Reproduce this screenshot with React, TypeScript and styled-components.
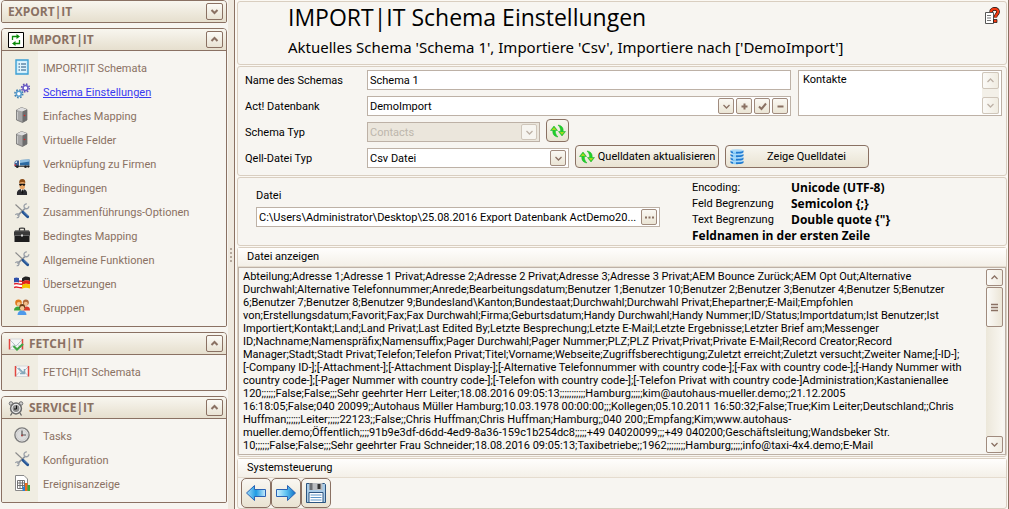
import React from "react";
import styled, { createGlobalStyle, css } from "styled-components";

const brown = "#8a7163";
const field = "#bdb1a6";
const groove = "#d9cec0";
const paper = "#f7f5f1";
const ui = 'Roboto, "Liberation Sans", sans-serif';
const display = '"Open Sans", "Noto Sans", sans-serif';

const Global = createGlobalStyle`
  * { box-sizing: border-box; }
  body { margin: 0; background: ${paper}; font: 11px/13px ${ui}; color: #000; }
  button, input, select, textarea { font: inherit; color: inherit; margin: 0; }
`;

/* ---------- window frame ---------- */

const Shell = styled.div`
  display: flex;
  min-height: 100vh;
  overflow: hidden;
`;

const Sidebar = styled.nav`
  flex: none;
  width: 228px;
  padding-left: 1px;
  display: flex;
  flex-direction: column;
  gap: 5px;
`;

const Splitter = styled.div`
  flex: none;
  width: 7px;
  display: flex;
  flex-direction: column;
  align-items: center;
  justify-content: center;
  gap: 2px;
  background: #efe9df;
  border-right: 1px solid ${brown};
  i { width: 2px; height: 2px; background: #b5a89c; }
`;

const Main = styled.main`
  flex: 1;
  min-width: 0;
  display: flex;
  flex-direction: column;
  padding: 1px 0 0 1px;
  border-right: 1px solid ${brown};
  background: #fbf8f3;
`;

/* ---------- sidebar groups ---------- */

const Group = styled.section`
  width: 226px;
  border: 1px solid ${brown};
  border-radius: 4px 4px 2px 2px;
  background: ${paper};
  overflow: hidden;
`;

const GroupHead = styled.header<{ $closed?: boolean }>`
  display: flex;
  align-items: center;
  height: ${(p) => (p.$closed ? 21 : 22)}px;
  padding: 0 3px 0 6px;
  gap: 5px;
  background: linear-gradient(#f8f6ef, #e6dfce);
  border-bottom: ${(p) => (p.$closed ? "none" : `1px solid ${brown}`)};
  h2 { flex: 1; margin: 0; font: 700 12px/16px ${display}; color: ${brown}; }
`;

const Fold = styled.button`
  width: 17px;
  height: 17px;
  padding: 0;
  display: grid;
  place-items: center;
  border: 1px solid ${brown};
  border-radius: 2px;
  background: linear-gradient(#fbfaf6, #e9e3d4);
  color: ${brown};
`;

const Items = styled.ul`
  margin: 0;
  padding: 5px 0 6px;
  list-style: none;
  background: linear-gradient(90deg, #f0ede2 36px, ${paper} 36px);
`;

const Item = styled.li`
  height: 24px;
  display: flex;
  align-items: center;
`;

const ItemIcon = styled.span`
  width: 41px;
  padding: 0 0 2px 12px;
  display: flex;
`;

const ItemLink = styled.a<{ $active?: boolean }>`
  color: ${(p) => (p.$active ? "#3a3af0" : brown)};
  text-decoration: ${(p) => (p.$active ? "underline" : "none")};
`;

/* ---------- panels ---------- */

const panel = css`
  border: 1px solid ${groove};
  border-radius: 3px;
  background: ${paper};
  margin: 0 1px 1px;
`;

const TitlePanel = styled.header`
  ${panel}
  display: flex;
  justify-content: space-between;
  align-items: flex-start;
  min-height: 64px;
  padding: 0 6px 0 50px;
  h1 { margin: 0; font: 400 23px/30px ${display}; }
  p { margin: 0; padding-top: 4px; font: 400 15px/22px "Noto Sans", sans-serif; }
`;

const HelpButton = styled.button`
  margin-top: 5px;
  padding: 0;
  border: 0;
  background: none;
  display: flex;
`;

const SchemaPanel = styled.section`
  ${panel}
  display: flex;
  gap: 7px;
  padding: 0 4px 0 7px;
  min-height: 110px;
`;

const Form = styled.div`
  flex: 1;
  min-width: 0;
  display: grid;
  grid-template-columns: 122px minmax(0, 1fr);
  grid-auto-rows: 26px;
  align-items: center;
`;

const Cell = styled.div`
  align-self: end;
  padding-bottom: 3px;
  display: flex;
  align-items: flex-end;
  gap: 6px;
`;

const TextBox = styled.div`
  flex: 1;
  min-width: 0;
  height: 20px;
  display: flex;
  align-items: center;
  gap: 2px;
  padding: 0 2px;
  border: 1px solid ${field};
  background: #fff;
  input {
    flex: 1;
    min-width: 0;
    height: 16px;
    padding: 0;
    border: 0;
    outline: 0;
    background: none;
    text-overflow: ellipsis;
  }
`;

const MiniButton = styled.button`
  flex: none;
  width: 16px;
  height: 16px;
  padding: 0;
  display: grid;
  place-items: center;
  border: 1px solid #a08b7e;
  border-radius: 2px;
  background: linear-gradient(#faf8f3, #ebe5d5);
  color: ${brown};
`;

const DropDown = styled.div<{ $w: number; $off?: boolean }>`
  flex: none;
  width: ${(p) => p.$w}px;
  height: 20px;
  display: grid;
  grid-template-columns: 1fr 18px;
  align-items: center;
  border: 1px solid ${field};
  background: ${(p) => (p.$off ? "#ebe6dc" : "#fff")};
  select {
    grid-area: 1 / 1 / 2 / 3;
    height: 18px;
    padding: 0 2px;
    border: 0;
    outline: 0;
    appearance: none;
    background: none;
    color: ${(p) => (p.$off ? "#bdb6ac" : "#000")};
    opacity: 1;
  }
`;

const DropArrow = styled.span<{ $off?: boolean }>`
  grid-area: 1 / 2 / 2 / 3;
  width: 16px;
  height: 16px;
  display: grid;
  place-items: center;
  pointer-events: none;
  border: 1px solid ${(p) => (p.$off ? "#cfc6ba" : "#a08b7e")};
  border-radius: 2px;
  background: ${(p) => (p.$off ? "#f7f5f0" : "linear-gradient(#faf8f3, #ebe5d5)")};
  color: ${(p) => (p.$off ? "#bdb1a6" : brown)};
`;

const PushButton = styled.button<{ $w?: number }>`
  flex: none;
  width: ${(p) => p.$w ?? 23}px;
  height: 23px;
  padding: 0 3px;
  display: flex;
  align-items: center;
  justify-content: center;
  gap: 3px;
  border: 1px solid ${brown};
  border-radius: 4px;
  background: linear-gradient(#f8f6f0, #e9e3d2);
  white-space: nowrap;
  svg { flex: none; }
  span { flex: 1; text-align: center; }
`;

const Memo = styled.div`
  flex: none;
  width: 204px;
  height: 46px;
  margin-top: 3px;
  display: flex;
  padding: 1px 2px;
  border: 1px solid ${field};
  background: #fff;
  textarea {
    flex: 1;
    min-width: 0;
    padding: 1px 2px;
    border: 0;
    outline: 0;
    resize: none;
    overflow: hidden;
    background: none;
  }
`;

const Bar = styled.div`
  flex: none;
  width: 17px;
  display: flex;
  flex-direction: column;
  justify-content: space-between;
  background: #f3f0e8;
`;

const BarButton = styled.button<{ $off?: boolean }>`
  height: 17px;
  padding: 0;
  display: grid;
  place-items: center;
  border: 1px solid ${(p) => (p.$off ? "#cfc6ba" : "#a08b7e")};
  border-radius: 2px;
  background: linear-gradient(90deg, #fbfaf7, #f0ece1);
  color: ${(p) => (p.$off ? "#bdb1a6" : brown)};
`;

const Track = styled.div`
  flex: 1;
  padding-top: 1px;
  background: linear-gradient(90deg, #ece7da, #f9f7f1);
`;

const Thumb = styled.div`
  height: 40px;
  display: grid;
  place-items: center;
  border: 1px solid #a08b7e;
  border-radius: 2px;
  background: linear-gradient(90deg, #fbfaf7, #ebe5d6);
  color: ${brown};
`;

const FilePanel = styled.section`
  ${panel}
  display: flex;
  min-height: 69px;
  padding: 2px 0 0 18px;
`;

const FileField = styled.div`
  flex: 1;
  min-width: 0;
  padding-top: 9px;
  display: flex;
  flex-direction: column;
  gap: 4px;
  label { line-height: 14px; }
  > div { flex: none; }
`;

const Facts = styled.dl`
  flex: none;
  width: 346px;
  margin: 0;
  padding-left: 32px;
  display: grid;
  grid-template-columns: 99px 1fr;
  grid-auto-rows: 16px;
  line-height: 16px;
  dt, dd { margin: 0; }
  dd { font: 700 12px/16px ${display}; white-space: nowrap; }
  dd:last-child { grid-column: 1 / 3; }
`;

const Section = styled.section<{ $grow?: boolean }>`
  ${panel}
  ${(p) => p.$grow && "flex: 1;"}
  display: flex;
  flex-direction: column;
`;

const Caption = styled.h3`
  margin: 0;
  padding: 2px 9px;
  font: 400 11px/14px ${ui};
  border-bottom: 1px solid #e5dccf;
  background: linear-gradient(#fffefd, #f4f0e8);
`;

const Viewer = styled.div`
  display: flex;
  margin: 0 0 1px;
  padding: 1px 2px 1px 0;
  border: 1px solid ${field};
  background: ${paper};
  textarea {
    flex: 1;
    min-width: 0;
    height: 184px;
    padding: 1px 0 0 4px;
    border: 0;
    outline: 0;
    resize: none;
    white-space: pre;
    overflow: hidden;
    background: none;
  }
`;

const Tools = styled.div`
  display: flex;
  padding: 0 3px;
`;

const ToolButton = styled.button`
  width: 30px;
  height: 30px;
  padding: 0;
  display: grid;
  place-items: center;
  border: 1px solid ${brown};
  border-radius: 5px;
  background: linear-gradient(#f9f7f2, #e9e3d2);
`;

/* ---------- glyphs ---------- */

const glyphs = {
  down: "M1.5 3 4.5 6 7.5 3",
  up: "M1.5 6 4.5 3 7.5 6",
  plus: "M4.5 1.5v6M1.5 4.5h6",
  minus: "M1.5 4.5h6",
  check: "M1 4.5 3.5 7 8 1.5",
  grip: "M1 1.5h7M1 4.5h7M1 7.5h7",
  dots: "M0 4.5h2M3.5 4.5h2M7 4.5h2",
};

const Glyph = ({ name, bold }: { name: keyof typeof glyphs; bold?: boolean }) => (
  <svg width="9" height="9" viewBox="0 0 9 9" fill="none" stroke="currentColor" strokeWidth={bold ? 2 : 1.3}>
    <path d={glyphs[name]} />
  </svg>
);

const Svg = ({ size = 16, children }: { size?: number; children: React.ReactNode }) => (
  <svg width={size} height={size} viewBox="0 0 16 16">{children}</svg>
);

const RecycleIcon = () => (
  <Svg>
    <path d="M.5.5h15v15H.5z" fill="#fff" stroke="#000" />
    <path d="M4.500 8V4.500H9M11.500 8v3.500H7" fill="none" stroke="#0a8a0a" strokeWidth="1.300" />
    <path d="M8.500 2l3.500 2.500L8.500 7zM7.500 9l-3.500 2.500L7.500 14z" fill="#0a8a0a" />
  </Svg>
);

const ListIcon = () => (
  <Svg>
    <path d="M2 1h12v14H2z" fill="#c5eafb" stroke="#3c9fd4" strokeWidth="1.400" />
    <path d="M3.500 2.500h9v11h-9z" fill="#dff4fd" />
    <path d="M4.500 5h1.500M4.500 8h1.500M4.500 11h1.500M7 5h5M7 8h5M7 11h5" stroke="#23507c" strokeWidth="1.100" />
  </Svg>
);

const GearsIcon = () => (
  <Svg>
    <circle cx="11.500" cy="5" r="3.900" fill="none" stroke="#6252b8" strokeWidth="1.600" strokeDasharray="1.600 1.460" />
    <circle cx="11.500" cy="5" r="2.500" fill="#fff" stroke="#6a5bc4" strokeWidth="1.600" />
    <circle cx="4.800" cy="10.800" r="3.900" fill="none" stroke="#3f7fae" strokeWidth="1.600" strokeDasharray="1.600 1.460" />
    <circle cx="4.800" cy="10.800" r="2.500" fill="#fff" stroke="#5b9fd0" strokeWidth="1.600" />
  </Svg>
);

const ServerIcon = () => (
  <Svg>
    <path d="M2.500 3 7.500.5 13 2.500V13L8.500 15.500 2.500 13z" fill="#a5a5a5" stroke="#666" strokeWidth=".7" />
    <path d="M2.500 3 7.500.5 13 2.500 8.500 4.500z" fill="#dedede" />
    <path d="M8.500 4.500 13 2.500V13l-4.500 2.500z" fill="#6d6d6d" />
    <path d="M3.500 5v7.500" stroke="#c9c9c9" />
    <circle cx="10.500" cy="8.500" r=".8" fill="#d22" />
  </Svg>
);

const TruckIcon = () => (
  <Svg>
    <path d="M6 5 15.500 4.500V10.500H6z" fill="#2c6ba3" />
    <path d="M6 5 15.500 4.500V6.500L6 8z" fill="#8fbfe2" />
    <path d="M.5 7 2 5.500h3v6H.5z" fill="#3f5f92" />
    <path d="M1 8h2V6.300H2z" fill="#cfe6f7" />
    <path d="M.5 9.500h1.500V11H.5z" fill="#e33" />
    <path d="M1 10.800h14.500v1H1z" fill="#222" />
    <circle cx="3.300" cy="11.800" r="1.300" fill="#222" />
    <circle cx="11.500" cy="11.800" r="1.300" fill="#222" />
    <circle cx="14.300" cy="11.600" r="1.100" fill="#222" />
  </Svg>
);

const AgentIcon = () => (
  <Svg>
    <path d="M3 16c-.5-3.500 1-6 5-6s5.500 2.500 5 6z" fill="#2b2b30" />
    <path d="M6.500 9.500h3.500L8.300 14z" fill="#fff" />
    <path d="M8 10.500h.8l.4 3L8.300 15l-.8-1.500z" fill="#111" />
    <path d="M5.500 3h5.500v4.500c0 2-1.200 3-2.700 3S5.500 9.500 5.500 7.500z" fill="#e9a869" />
    <path d="M5.200 4C5.200 1 6 0 8.300 0s3 1 3 4c-2-1.500-4-1.500-6.100 0z" fill="#8a4a14" />
    <path d="M5.200 4.800h6v1.300L10 7 8.300 5.800 6.500 7 5.200 6.100z" fill="#111" />
  </Svg>
);

const ToolsIcon = () => (
  <Svg>
    <path d="M1.500 1.500 9 8.500" stroke="#8a8a8a" strokeWidth="1.100" />
    <path d="M3.500 12.700 11.500 5" stroke="#8c9299" strokeWidth="1.700" />
    <path d="M14.800 3.200a2.400 2.400 0 1 1-2-2.200M1.400 12a1.900 1.900 0 1 1 1.300 2.600" fill="none" stroke="#9aa0a8" strokeWidth="1.300" />
    <path d="M9 9.300 13.700 13.800" stroke="#1f4f8f" strokeWidth="2.800" strokeLinecap="round" />
    <path d="M9.500 9 13.800 13" stroke="#6f9bd2" strokeWidth=".8" />
  </Svg>
);

const CaseIcon = () => (
  <Svg>
    <path d="M5.500 4V1.800c0-1 5-1 5 0V4" fill="none" stroke="#333" strokeWidth="1.300" />
    <path d="M1 3.500h14l1 1.500v4H0V5z" fill="#3a3a3a" />
    <path d="M.5 8.500h15V15H.5z" fill="#1d1d1d" />
    <path d="M0 8.500h16" stroke="#777" strokeWidth=".8" />
    <path d="M7 7.500h2v2H7z" fill="#ddd" />
    <path d="M1 4h14" stroke="#666" strokeWidth=".8" />
  </Svg>
);

const FlagsIcon = () => (
  <Svg>
    <path d="M0 3c3-1.500 5 1 8.500 0v10.500C5 14.500 3 12 0 13.500z" fill="#fff" />
    <path d="M0 6c3-1.500 5 1 8.500 0M0 9c3-1.500 5 1 8.500 0M0 12.500c3-1.500 5 1 8.500 0" stroke="#e0202a" strokeWidth="1.500" fill="none" />
    <path d="M0 3c2-1 3.500-.5 5 0v4.500c-1.500-.5-3-1-5 0z" fill="#2f50a8" />
    <path d="M8 3.500c3-3 5-2 8-1v3.500c-3-1-5-1-8 1z" fill="#222" />
    <path d="M8 7c3-2 5-2 8-1v3.500c-3-1-5-1-8 .5z" fill="#e2231a" />
    <path d="M8 10c3-1.500 5-1.500 8-.5V13.500c-3-1-5-1-8 0z" fill="#f6c400" />
  </Svg>
);

const GroupIcon = () => (
  <Svg>
    <path d="M0 11.500c0-3 2-4 4-4s4 1.500 4 4z" fill="#3aa63a" />
    <path d="M8 11.500c0-3 2-4 4.500-4S16 9 16 11.500z" fill="#d93a2b" />
    <circle cx="4.500" cy="3.800" r="3.300" fill="#e07a1c" />
    <circle cx="4.800" cy="5" r="2" fill="#f6c68d" />
    <circle cx="11.800" cy="3.500" r="3" fill="#b0693a" />
    <circle cx="11.800" cy="4.800" r="2" fill="#f2bd8b" />
    <path d="M3.500 16c0-3 2-4.500 4.500-4.500s4.500 1.500 4.500 4.500z" fill="#4f9aea" />
    <circle cx="8.200" cy="8" r="2.900" fill="#6a3d17" />
    <circle cx="8.200" cy="9.200" r="2.200" fill="#f4c493" />
  </Svg>
);

const MailIcon = ({ check }: { check?: boolean }) => (
  <Svg>
    <path d="M1.500 3h13v10.500h-13z" fill="#f4f6f7" stroke="#d5d8da" />
    <path d="M1.500 3.500 8 10l6.500-6.500M1.500 13 6 8.500M14.500 13 10 8.500" fill="none" stroke="#b5c4cc" />
    <path d="M1.500 3v10.500M14.500 3v10.500" stroke="#e2463f" strokeWidth="1.500" />
    {check ? (
      <path d="M5.500 10 9 13.500 15 8" fill="none" stroke="#3fa545" strokeWidth="2.200" />
    ) : (
      <path d="M4.500 5l5 5M10.500 6v4.500H6" fill="none" stroke="#86a9bb" strokeWidth="1.500" />
    )}
  </Svg>
);

const AlarmIcon = () => (
  <Svg>
    <circle cx="3" cy="3.500" r="1.800" fill="#ccc" stroke="#777" />
    <circle cx="13" cy="3.500" r="1.800" fill="#ccc" stroke="#777" />
    <path d="M4 13l-1.500 2.500M12 13l1.500 2.500" stroke="#666" strokeWidth="1.300" />
    <circle cx="8" cy="8.500" r="5.400" fill="#e8e8e8" stroke="#6a6a6a" strokeWidth="1.500" />
    <circle cx="8" cy="8.500" r="3.400" fill="#8b8b8b" />
    <path d="M8.500 5.500v3.500H6" fill="none" stroke="#111" />
  </Svg>
);

const ClockIcon = () => (
  <Svg>
    <circle cx="8" cy="8" r="7.100" fill="#f1f1f1" stroke="#7c7c7c" strokeWidth="1.400" />
    <circle cx="8" cy="8" r="5.500" fill="#dcdcdc" stroke="#bbb" strokeWidth=".6" />
    <path d="M8 3.500V8h4" fill="none" stroke="#555" strokeWidth="1.200" />
    <circle cx="8" cy="8.500" r="1" fill="#a44" />
  </Svg>
);

const ReportIcon = () => (
  <Svg>
    <path d="M1.500.5H10L13.500 4v11.500h-12z" fill="#fff" stroke="#888" />
    <path d="M3.500 5.500h7v8h-7zM3.500 8h7M3.500 10.500h7M6 5.500v8M8.500 5.500v8" fill="none" stroke="#666" strokeWidth=".9" />
    <path d="M8.500 11.500h2.500v4.500H8.500z" fill="#2d7fd0" />
    <path d="M11 8h2.500v8H11z" fill="#ee6a1c" />
    <path d="M13.500 10H16V16h-2.500z" fill="#3aa63a" />
  </Svg>
);

const HelpIcon = () => (
  <svg width="16" height="18" viewBox="0 0 16 18">
    <path d="M1.500 5.500h8v11h-8z" fill="#fff" stroke="#555" />
    <path d="M3 8.500h4M3 11h4M3 13.500h4" stroke="#777" />
    <path d="M7 5c.3-4.300 7.500-4 7 0-.2 2.300-2.500 2.500-2.700 5.500" fill="none" stroke="#111" strokeWidth="3.600" />
    <path d="M7 5c.3-4.300 7.500-4 7 0-.2 2.300-2.500 2.500-2.700 5.500" fill="none" stroke="#f03a12" strokeWidth="2.400" />
    <path d="M9.500 12.500h3.500v3H9.500z" fill="#f03a12" stroke="#111" strokeWidth=".7" />
  </svg>
);

const RefreshIcon = () => (
  <Svg>
    <path d="M8 14C4 13.500 2.500 11 2.800 7.500H.5L4 3l3.500 4.500H5.400C5.200 10 6 12 8 14z" fill="#1fd02a" stroke="#18b022" strokeWidth=".5" />
    <path d="M8 2c4 .5 5.500 3 5.200 6.500h2.300L12 13 8.500 8.500h2.100C10.800 6 10 4 8 2z" fill="#1fd02a" stroke="#18b022" strokeWidth=".5" />
    <path d="M1.800 7 4 4.200 6.200 7zM9.800 9 12 11.800 14.200 9z" fill="#a8d820" />
  </Svg>
);

const DatabaseIcon = () => (
  <Svg>
    {[12, 8.5, 5, 1.5].map((y) => (
      <g key={y}>
        <path d={`M1.500 ${y}v1.500c0 2.200 13 2.200 13 0V${y}z`} fill="#1f7ad0" />
        <path d={`M4 ${y}v2.800c1 .4 2 .5 3 .5V${y}z`} fill="#8cd0fa" />
        <ellipse cx="8" cy={y} rx="6.500" ry="1.300" fill="#a9d8f8" />
      </g>
    ))}
  </Svg>
);

const ArrowIcon = ({ right }: { right?: boolean }) => (
  <svg width="22" height="18" viewBox="0 0 22 18">
    <defs>
      <linearGradient id={right ? "ar" : "al"} x1="0" x2="1">
        <stop offset="0" stopColor={right ? "#d6f2ff" : "#a5def8"} />
        <stop offset=".5" stopColor={right ? "#5fc4f2" : "#1c9be4"} />
        <stop offset="1" stopColor={right ? "#0c6fc4" : "#c9ecfb"} />
      </linearGradient>
    </defs>
    <path
      d={right ? "M1.500 5.500h11v-4l8 7.500-8 7.500v-4h-11z" : "M20.500 5.500h-11v-4L1.500 9l8 7.500v-4h11z"}
      fill={`url(#${right ? "ar" : "al"})`}
      stroke="#2a62b4"
    />
  </svg>
);

const SaveIcon = () => (
  <svg width="20" height="20" viewBox="0 0 20 20">
    <path d="M.5.5h18l1 1v18H.5z" fill="#a9cbe6" stroke="#2b5480" />
    <path d="M3.500 0h13v7h-13z" fill="#b9bcc0" />
    <path d="M3.500 0h3v7h-3z" fill="#6a6e73" />
    <path d="M11.500 1h3v5h-3z" fill="#333" />
    <path d="M3 9.500h14v10H3z" fill="#fff" stroke="#2b5480" />
    <path d="M4.500 12h11M4.500 14.500h11M4.500 17h11" stroke="#5b95c8" />
  </svg>
);

/* ---------- content ---------- */

type Entry = { text: string; icon: React.ReactNode; active?: boolean };

const groups: { title: string; icon?: React.ReactNode; entries?: Entry[] }[] = [
  { title: "EXPORT|IT" },
  {
    title: "IMPORT|IT",
    icon: <RecycleIcon />,
    entries: [
      { text: "IMPORT|IT Schemata", icon: <ListIcon /> },
      { text: "Schema Einstellungen", icon: <GearsIcon />, active: true },
      { text: "Einfaches Mapping", icon: <ServerIcon /> },
      { text: "Virtuelle Felder", icon: <ServerIcon /> },
      { text: "Verknüpfung zu Firmen", icon: <TruckIcon /> },
      { text: "Bedingungen", icon: <AgentIcon /> },
      { text: "Zusammenführungs-Optionen", icon: <ToolsIcon /> },
      { text: "Bedingtes Mapping", icon: <CaseIcon /> },
      { text: "Allgemeine Funktionen", icon: <ToolsIcon /> },
      { text: "Übersetzungen", icon: <FlagsIcon /> },
      { text: "Gruppen", icon: <GroupIcon /> },
    ],
  },
  {
    title: "FETCH|IT",
    icon: <MailIcon check />,
    entries: [{ text: "FETCH|IT Schemata", icon: <MailIcon /> }],
  },
  {
    title: "SERVICE|IT",
    icon: <AlarmIcon />,
    entries: [
      { text: "Tasks", icon: <ClockIcon /> },
      { text: "Konfiguration", icon: <ToolsIcon /> },
      { text: "Ereignisanzeige", icon: <ReportIcon /> },
    ],
  },
];

const csv = [
  "Abteilung;Adresse 1;Adresse 1 Privat;Adresse 2;Adresse 2 Privat;Adresse 3;Adresse 3 Privat;AEM Bounce Zurück;AEM Opt Out;Alternative",
  "Durchwahl;Alternative Telefonnummer;Anrede;Bearbeitungsdatum;Benutzer 1;Benutzer 10;Benutzer 2;Benutzer 3;Benutzer 4;Benutzer 5;Benutzer",
  "6;Benutzer 7;Benutzer 8;Benutzer 9;Bundesland\\Kanton;Bundestaat;Durchwahl;Durchwahl Privat;Ehepartner;E-Mail;Empfohlen",
  "von;Erstellungsdatum;Favorit;Fax;Fax Durchwahl;Firma;Geburtsdatum;Handy Durchwahl;Handy Nummer;ID/Status;Importdatum;Ist Benutzer;Ist",
  "Importiert;Kontakt;Land;Land Privat;Last Edited By;Letzte Besprechung;Letzte E-Mail;Letzte Ergebnisse;Letzter Brief am;Messenger",
  "ID;Nachname;Namenspräfix;Namensuffix;Pager Durchwahl;Pager Nummer;PLZ;PLZ Privat;Privat;Private E-Mail;Record Creator;Record",
  "Manager;Stadt;Stadt Privat;Telefon;Telefon Privat;Titel;Vorname;Webseite;Zugriffsberechtigung;Zuletzt erreicht;Zuletzt versucht;Zweiter Name;[-ID-];",
  "[-Company ID-];[-Attachment-];[-Attachment Display-];[-Alternative Telefonnummer with country code-];[-Fax with country code-];[-Handy Nummer with",
  "country code-];[-Pager Nummer with country code-];[-Telefon with country code-];[-Telefon Privat with country code-]Administration;Kastanienallee",
  "120;;;;;;False;False;;;Sehr geehrter Herr Leiter;18.08.2016 09:05:13;;;;;;;;;;;Hamburg;;;;;kim@autohaus-mueller.demo;;21.12.2005",
  "16:18:05;False;040 20099;;Autohaus Müller Hamburg;10.03.1978 00:00:00;;;Kollegen;05.10.2011 16:50:32;False;True;Kim Leiter;Deutschland;;Chris",
  "Huffman;;;;;;Leiter;;;;;22123;;False;;Chris Huffman;Chris Huffman;Hamburg;;040 200;;Empfang;Kim;www.autohaus-",
  "mueller.demo;Öffentlich;;;;91b9e3df-d6dd-4ed9-8a36-159c1b254dc8;;;;;+49 04020099;;;+49 040200;Geschäftsleitung;Wandsbeker Str.",
  "10;;;;;;False;False;;;Sehr geehrter Frau Schneider;18.08.2016 09:05:13;Taxibetriebe;;1962;;;;;;;;Hamburg;;;;;info@taxi-4x4.demo;E-Mail",
].join("\n");

export default function App() {
  return (
    <>
      <Global />
      <Shell>
        <Sidebar>
          {groups.map((g) => (
            <Group key={g.title}>
              <GroupHead $closed={!g.entries}>
                {g.icon}
                <h2>{g.title}</h2>
                <Fold aria-label={g.title}>
                  <Glyph name={g.entries ? "up" : "down"} bold />
                </Fold>
              </GroupHead>
              {g.entries && (
                <Items>
                  {g.entries.map((e) => (
                    <Item key={e.text}>
                      <ItemIcon>{e.icon}</ItemIcon>
                      <ItemLink href="#" $active={e.active}>{e.text}</ItemLink>
                    </Item>
                  ))}
                </Items>
              )}
            </Group>
          ))}
        </Sidebar>
        <Splitter><i /><i /><i /><i /></Splitter>
        <Main>
          <TitlePanel>
            <div>
              <h1>IMPORT|IT Schema Einstellungen</h1>
              <p>Aktuelles Schema 'Schema 1', Importiere 'Csv', Importiere nach ['DemoImport']</p>
            </div>
            <HelpButton aria-label="Hilfe"><HelpIcon /></HelpButton>
          </TitlePanel>

          <SchemaPanel>
            <Form>
              <label htmlFor="name">Name des Schemas</label>
              <TextBox><input id="name" defaultValue="Schema 1" /></TextBox>
              <label htmlFor="db">Act! Datenbank</label>
              <TextBox>
                <input id="db" defaultValue="DemoImport" />
                <MiniButton aria-label="Auswählen"><Glyph name="down" /></MiniButton>
                <MiniButton aria-label="Hinzufügen"><Glyph name="plus" bold /></MiniButton>
                <MiniButton aria-label="Übernehmen"><Glyph name="check" bold /></MiniButton>
                <MiniButton aria-label="Entfernen"><Glyph name="minus" bold /></MiniButton>
              </TextBox>
              <label htmlFor="type">Schema Typ</label>
              <Cell>
                <DropDown $w={173} $off>
                  <select id="type" disabled><option>Contacts</option></select>
                  <DropArrow $off><Glyph name="down" /></DropArrow>
                </DropDown>
                <PushButton aria-label="Aktualisieren"><RefreshIcon /></PushButton>
              </Cell>
              <label htmlFor="source">Qell-Datei Typ</label>
              <Cell>
                <DropDown $w={202}>
                  <select id="source"><option>Csv Datei</option></select>
                  <DropArrow><Glyph name="down" /></DropArrow>
                </DropDown>
                <PushButton $w={144}><RefreshIcon /><span>Quelldaten aktualisieren</span></PushButton>
                <PushButton $w={144}><DatabaseIcon /><span>Zeige Quelldatei</span></PushButton>
              </Cell>
            </Form>
            <Memo>
              <textarea aria-label="Kontakte" readOnly value="Kontakte" />
              <Bar>
                <BarButton $off aria-label="Nach oben"><Glyph name="up" /></BarButton>
                <BarButton $off aria-label="Nach unten"><Glyph name="down" /></BarButton>
              </Bar>
            </Memo>
          </SchemaPanel>

          <FilePanel>
            <FileField>
              <label htmlFor="file">Datei</label>
              <TextBox>
                <input id="file" readOnly value="C:\Users\Administrator\Desktop\25.08.2016 Export Datenbank ActDemo20..." />
                <MiniButton aria-label="Durchsuchen"><Glyph name="dots" bold /></MiniButton>
              </TextBox>
            </FileField>
            <Facts>
              <dt>Encoding:</dt><dd>Unicode (UTF-8)</dd>
              <dt>Feld Begrenzung</dt><dd>Semicolon {"{;}"}</dd>
              <dt>Text Begrenzung</dt><dd>Double quote {'{"}'}</dd>
              <dd>Feldnamen in der ersten Zeile</dd>
            </Facts>
          </FilePanel>

          <Section>
            <Caption>Datei anzeigen</Caption>
            <Viewer>
              <textarea aria-label="Datei anzeigen" readOnly wrap="off" value={csv} />
              <Bar>
                <BarButton aria-label="Nach oben"><Glyph name="up" /></BarButton>
                <Track><Thumb><Glyph name="grip" /></Thumb></Track>
                <BarButton aria-label="Nach unten"><Glyph name="down" /></BarButton>
              </Bar>
            </Viewer>
          </Section>

          <Section $grow>
            <Caption>Systemsteuerung</Caption>
            <Tools>
              <ToolButton aria-label="Zurück"><ArrowIcon /></ToolButton>
              <ToolButton aria-label="Weiter"><ArrowIcon right /></ToolButton>
              <ToolButton aria-label="Speichern"><SaveIcon /></ToolButton>
            </Tools>
          </Section>
        </Main>
      </Shell>
    </>
  );
}
